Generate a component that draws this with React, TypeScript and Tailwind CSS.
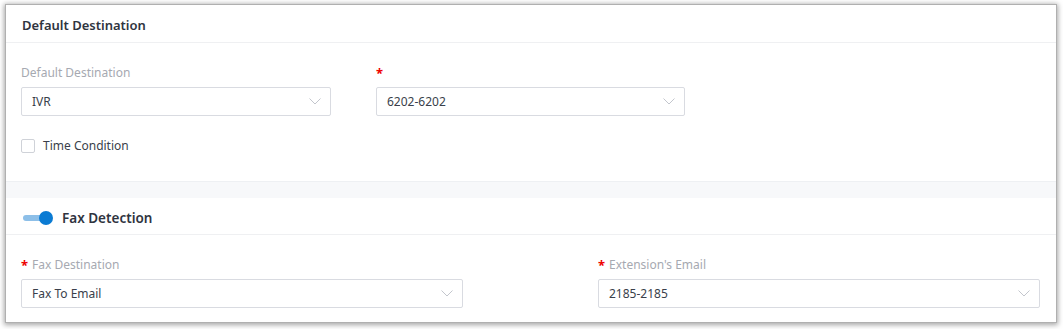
const font = { fontFamily: '"Noto Sans", "Open Sans", Arial, sans-serif' };

function Chevron() {
  return (
    <svg width="12" height="7" viewBox="0 0 12 7" fill="none" className="shrink-0">
      <polyline points="0.5,0.5 6,6 11.5,0.5" stroke="#c3c6cd" strokeWidth="1" />
    </svg>
  );
}

function Select({ value, width }: { value: string; width: string }) {
  return (
    <div
      className={`flex h-[29px] items-center justify-between rounded-[2px] border border-[#d9dbe1] bg-white pl-[10px] pr-[9px] ${width}`}
    >
      <span className="text-[12px] text-[#3a3f4b]">{value}</span>
      <Chevron />
    </div>
  );
}

function Label({ text, required }: { text?: string; required?: boolean }) {
  return (
    <div className="flex h-[18px] items-center text-[12px] text-[#a6a9b1]">
      {required && <span className="mr-[4px] text-[13px] font-bold leading-none text-[#ee0000]">*</span>}
      {text}
    </div>
  );
}

export default function App() {
  return (
    <div className="h-[329px] w-[1063px] bg-white p-[5px] pl-[6px] pr-[7px] pb-[7px]" style={font}>
      <div className="flex h-full w-full flex-col bg-white shadow-[0_0_0_1px_#b0b0b0,0_1px_5px_2px_rgba(0,0,0,0.35)]">
        {/* Default Destination header */}
        <div className="flex h-[38px] shrink-0 items-center border-b border-[#eff0f2] px-[16px] pt-[4px]">
          <span className="text-[13px] font-semibold text-[#2f3440]">Default Destination</span>
        </div>

        {/* Default destination body */}
        <div className="flex h-[138px] shrink-0 flex-col px-[15px] pt-[21px]">
          <div className="flex gap-[45px]">
            <div className="flex flex-col gap-[5px]">
              <Label text="Default Destination" />
              <Select value="IVR" width="w-[310px]" />
            </div>
            <div className="flex flex-col gap-[5px]">
              <Label required />
              <Select value="6202-6202" width="w-[309px]" />
            </div>
          </div>
          <label className="mt-[21px] flex items-center gap-[8px]">
            <span className="h-[14px] w-[14px] rounded-[2px] border border-[#cfd2d8] bg-white" />
            <span className="text-[12px] text-[#3a3f4b]">Time Condition</span>
          </label>
        </div>

        {/* Band */}
        <div className="h-[17px] shrink-0 border-t border-[#eef0f3] bg-[#f7f8fa]" />

        {/* Fax Detection header */}
        <div className="flex h-[37px] shrink-0 items-center gap-[9px] border-b border-[#eff0f2] px-[17px] pt-[4px]">
          <div className="relative h-[14px] w-[30px]">
            <div className="absolute left-0 top-[4px] h-[6px] w-[26px] rounded-full bg-[#8dbfe8]" />
            <div className="absolute right-0 top-0 h-[14px] w-[14px] rounded-full bg-[#0b7bd3]" />
          </div>
          <span className="text-[13.5px] font-semibold text-[#2f3440]">Fax Detection</span>
        </div>

        {/* Fax body */}
        <div className="flex gap-[135px] px-[15px] pt-[21px]">
          <div className="flex flex-col gap-[5px]">
            <Label text="Fax Destination" required />
            <Select value="Fax To Email" width="w-[442px]" />
          </div>
          <div className="flex flex-col gap-[5px]">
            <Label text="Extension's Email" required />
            <Select value="2185-2185" width="w-[442px]" />
          </div>
        </div>
      </div>
    </div>
  );
}
